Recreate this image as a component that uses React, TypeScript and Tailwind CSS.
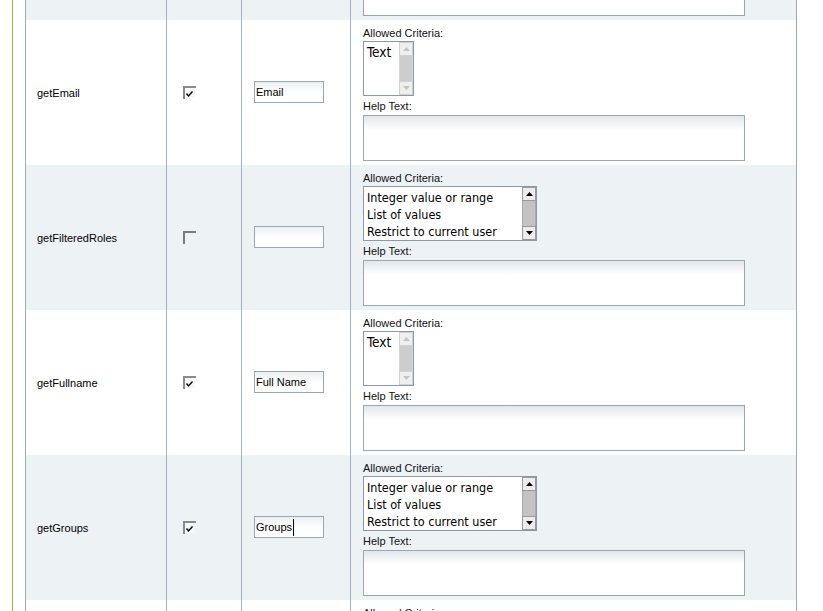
import React from "react";

type Row = {
  name: string;
  checked: boolean;
  value: string;
  big: boolean;
  gray: boolean;
  caret?: boolean;
};

const rows: Row[] = [
  { name: "getEmail", checked: true, value: "Email", big: false, gray: false },
  { name: "getFilteredRoles", checked: false, value: "", big: true, gray: true },
  { name: "getFullname", checked: true, value: "Full Name", big: false, gray: false },
  { name: "getGroups", checked: true, value: "Groups", big: true, gray: true, caret: true },
];

function Arrow({ up, color }: { up: boolean; color: string }) {
  return (
    <svg width="7" height="4" viewBox="0 0 7 4">
      {up ? <polygon points="0,4 7,4 3.5,0" fill={color} /> : <polygon points="0,0 7,0 3.5,4" fill={color} />}
    </svg>
  );
}

function ScrollBar({ enabled }: { enabled: boolean }) {
  const btn = enabled
    ? "h-[14px] flex items-center justify-center bg-[#ececec] border border-[#9a9a9a]"
    : "h-[14px] flex items-center justify-center bg-[#efefef] border border-[#d2d2d2]";
  const arrow = enabled ? "#000000" : "#c4c4c4";
  return (
    <div className={"w-[14px] h-full flex flex-col " + (enabled ? "bg-[#c3c3c3]" : "bg-[#cdcdcd]")}>
      <div className={btn}>
        <Arrow up color={arrow} />
      </div>
      <div className={"flex-1 " + (enabled ? "border-x border-[#a8a8a8]" : "border-x border-[#d6d6d6]")} />
      <div className={btn}>
        <Arrow up={false} color={arrow} />
      </div>
    </div>
  );
}

function ListBox({ big }: { big: boolean }) {
  const items = big ? ["Integer value or range", "List of values", "Restrict to current user"] : ["Text"];
  return (
    <div
      className={
        "mt-[1px] h-[55px] border border-[#8d99a4] bg-white flex " + (big ? "w-[174px]" : "w-[51px]")
      }
    >
      <div
        className={
          "flex-1 pt-[2px] pl-[3px] text-black whitespace-nowrap overflow-hidden leading-[17px] " +
          (big
            ? "font-['DejaVu_Sans_Condensed','Liberation_Sans',sans-serif] text-[12.5px]"
            : "font-['DejaVu_Sans_Condensed','Liberation_Sans',sans-serif] text-[13.5px]")
        }
      >
        {items.map((t) => (
          <div key={t}>{t}</div>
        ))}
      </div>
      <ScrollBar enabled={big} />
    </div>
  );
}

function CheckBox({ checked }: { checked: boolean }) {
  return (
    <svg width="13" height="13" viewBox="0 0 13 13">
      {checked && <rect x="2" y="2" width="10" height="10" fill="#f7f7f7" />}
      <path d="M1 13 V1 H13" fill="none" stroke={checked ? "#8a8a8a" : "#7b7b7b"} strokeWidth="2" />
      {checked && <polyline points="3.5,7.5 5.5,10 9.5,5.5" fill="none" stroke="#000" strokeWidth="1.4" />}
    </svg>
  );
}

const colBorder = "border-r border-[#a4b1bd]";

export default function App() {
  return (
    <div className="w-[823px] h-[611px] overflow-hidden bg-white text-black font-['Liberation_Sans',Arial,sans-serif] text-[11px]">
      <div className="flex h-full">
        <div className="w-[12px] shrink-0" />
        <div className="w-px shrink-0 bg-[#9cb23f]" />
        <div className="w-[12px] shrink-0" />
        <div className="w-[772px] shrink-0 border-x border-[#9eabb6]">
          {/* tail of the previous row */}
          <div className="flex h-[20px] bg-[#edf2f5]">
            <div className={"w-[141px] " + colBorder} />
            <div className={"w-[75px] " + colBorder} />
            <div className={"w-[109px] " + colBorder} />
            <div className="flex-1 pl-[12px]">
              <div className="w-[382px] h-[16px] border-x border-b border-[#9aa7b1] bg-white" />
            </div>
          </div>
          {rows.map((r) => (
            <div key={r.name} className={"flex h-[145px] " + (r.gray ? "bg-[#edf2f5]" : "bg-white")}>
              <div className={"w-[141px] flex items-center pl-[11px] pt-[1px] " + colBorder}>{r.name}</div>
              <div className={"w-[75px] flex items-center pl-[16px] " + colBorder}>
                <CheckBox checked={r.checked} />
              </div>
              <div className={"w-[109px] flex items-center pl-[12px] pb-[1px] " + colBorder}>
                <div className="relative w-[70px] h-[22px] border border-[#9aa7b1] bg-[linear-gradient(to_bottom,#eceff1,#ffffff_11px)] flex items-center pl-[1px] leading-none">
                  <span>{r.value}</span>
                  {r.caret && <span className="ml-[1px] w-px h-[17px] bg-black" />}
                </div>
              </div>
              <div className="flex-1 pl-[12px] pt-[7px]">
                <div className="leading-[13px] text-[#111]">Allowed Criteria:</div>
                <ListBox big={r.big} />
                <div className="mt-[4px] leading-[13px] text-[#111]">Help Text:</div>
                <div className="mt-[2px] w-[382px] h-[46px] border border-[#9aa7b1] bg-[linear-gradient(to_bottom,#e3e7ea,#ffffff_14px)]" />
              </div>
            </div>
          ))}
          {/* start of the next row */}
          <div className="flex h-[11px] bg-white overflow-hidden">
            <div className={"w-[141px] " + colBorder} />
            <div className={"w-[75px] " + colBorder} />
            <div className={"w-[109px] " + colBorder} />
            <div className="flex-1 pl-[12px] pt-[7px]">
              <div className="leading-[13px] text-[#111]">Allowed Criteria:</div>
            </div>
          </div>
        </div>
      </div>
    </div>
  );
}
